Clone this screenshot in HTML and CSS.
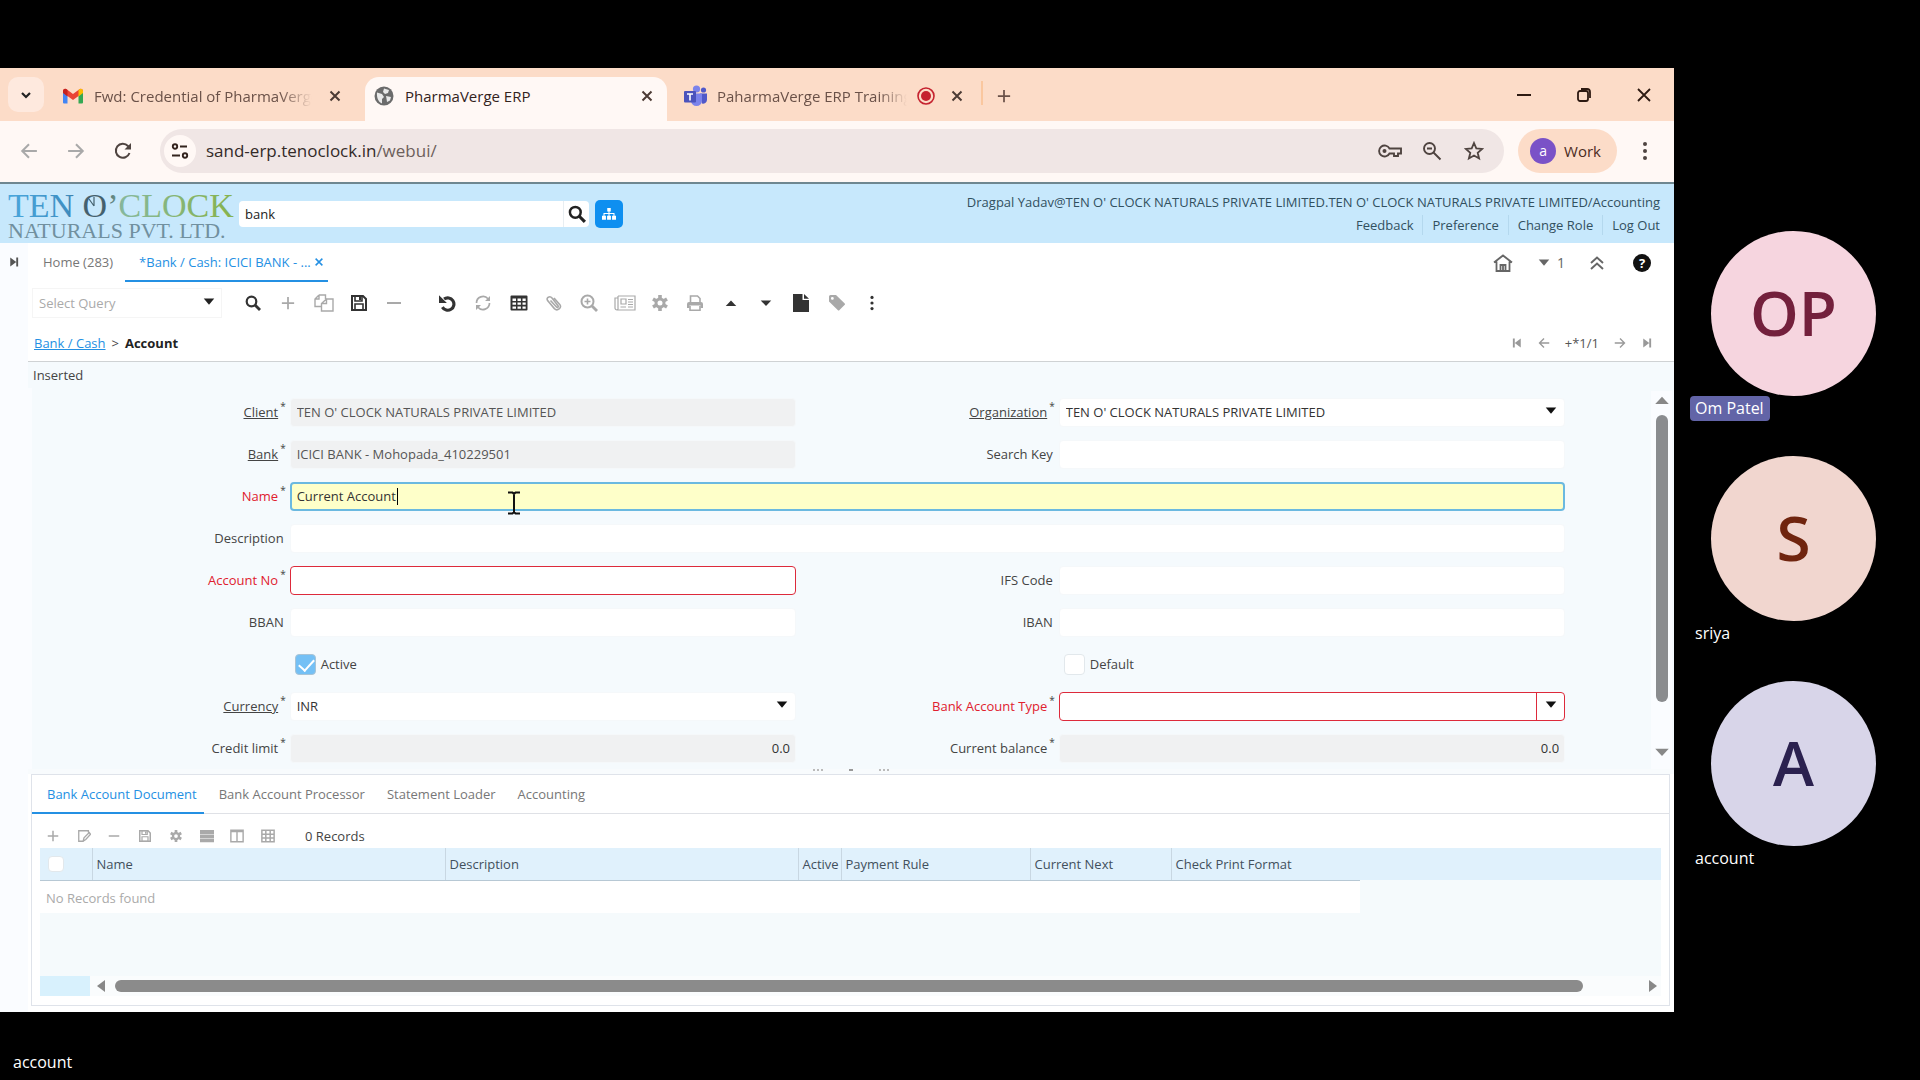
FILE: index.html
```html
<!DOCTYPE html>
<html lang="en">
<head>
<meta charset="utf-8">
<meta name="viewport" content="width=device-width, initial-scale=1">
<title>PharmaVerge ERP</title>
<link rel="stylesheet" href="styles.css">
</head>
<body>
<svg class="sprite" aria-hidden="true">
  <symbol id="i-close" viewBox="0 0 16 16"><path d="M3.500 3.500l9 9M12.500 3.500l-9 9" fill="none" stroke="currentColor" stroke-width="2"/></symbol>
  <symbol id="i-chev" viewBox="0 0 16 16"><path d="M4 6l4 4 4-4" fill="none" stroke="currentColor" stroke-width="2.200"/></symbol>
  <symbol id="i-plus" viewBox="0 0 16 16"><path d="M8 1v14M1 8h14" fill="none" stroke="currentColor" stroke-width="2"/></symbol>
  <symbol id="i-minus" viewBox="0 0 16 16"><path d="M1 8h14" fill="none" stroke="currentColor" stroke-width="2"/></symbol>
  <symbol id="i-dots" viewBox="0 0 16 20"><circle cx="8" cy="3" r="2"/><circle cx="8" cy="10" r="2"/><circle cx="8" cy="17" r="2"/></symbol>
  <symbol id="i-search" viewBox="0 0 16 16"><circle cx="6.500" cy="6.500" r="4.800" fill="none" stroke="currentColor" stroke-width="2.200"/><path d="M10 10l5 5" stroke="currentColor" stroke-width="2.800"/></symbol>
  <symbol id="i-left" viewBox="0 0 16 16"><path d="M15 8H2M8 2L2 8l6 6" fill="none" stroke="currentColor" stroke-width="1.800"/></symbol>
  <symbol id="i-right" viewBox="0 0 16 16"><path d="M1 8h13M8 2l6 6-6 6" fill="none" stroke="currentColor" stroke-width="1.800"/></symbol>
  <symbol id="i-last" viewBox="0 0 16 16"><path d="M3 2l8 6-8 6zM11 2h2.500v12H11z"/></symbol>
  <symbol id="i-first" viewBox="0 0 16 16"><path d="M13 2L5 8l8 6zM5 2H2.500v12H5z"/></symbol>
  <symbol id="i-caret" viewBox="0 0 16 16"><path d="M2 4h12l-6 7z"/></symbol>
  <symbol id="i-up" viewBox="0 0 16 16"><path d="M2 11.500h12L8 5z"/></symbol>
  <symbol id="i-down" viewBox="0 0 16 16"><path d="M2 5h12l-6 6.500z"/></symbol>
  <symbol id="i-save" viewBox="0 0 16 16"><path d="M1 1h11l3 3v11H1z" fill="none" stroke="currentColor" stroke-width="2"/><path d="M4 1h7v5H4zM4 9h8v6H4z" fill="none" stroke="currentColor" stroke-width="1.600"/><path d="M8 2h2v3H8z"/></symbol>
  <symbol id="i-copy" viewBox="0 0 20 18"><path d="M5 1h6.500v4M5 1L1 5v7.500h6.500M5 1v4H1M12.500 5H19v12H7.500V9.500zM12.500 5v4.500h-5" fill="none" stroke="currentColor" stroke-width="1.400"/></symbol>
  <symbol id="i-undo" viewBox="0 0 16 16"><path d="M4.500 4.500A5.500 5.500 0 1 1 3 11.700" fill="none" stroke="currentColor" stroke-width="2.800"/><path d="M0 1v7h7z"/></symbol>
  <symbol id="i-refresh" viewBox="0 0 16 16"><path d="M1.500 8A6.500 6.500 0 0 1 13 3.800M14.500 8A6.500 6.500 0 0 1 3 12.200" fill="none" stroke="currentColor" stroke-width="1.700"/><path d="M15 1v5h-5zM1 15v-5h5z"/></symbol>
  <symbol id="i-table" viewBox="0 0 18 16"><path fill-rule="evenodd" d="M1.500.5h15a1 1 0 0 1 1 1v13a1 1 0 0 1-1 1h-15a1 1 0 0 1-1-1v-13a1 1 0 0 1 1-1zM2.500 3.500v2.400H6V3.500zm5 0v2.400h3.400V3.500zm5 0v2.400h3.200V3.500zm-10 4v2.300H6V7.500zm5 0v2.300h3.400V7.500zm5 0v2.300h3.200V7.500zm-10 4v2.300H6v-2.300zm5 0v2.300h3.400v-2.300zm5 0v2.300h3.200v-2.300z"/></symbol>
  <symbol id="i-clip" viewBox="0 0 16 16"><path d="M4.500 5.500l6 6.500c1 1 2.300-.2 1.500-1.300L6 3C4 .5-.3 2.500 1.600 5.600l6.800 8c3 3 7.800-.8 5.300-4.200L8 3" fill="none" stroke="currentColor" stroke-width="1.600"/></symbol>
  <symbol id="i-zoomin" viewBox="0 0 18 18"><circle cx="7.500" cy="7.500" r="6" fill="none" stroke="currentColor" stroke-width="2"/><path d="M7.500 4.500v6M4.500 7.500h6" stroke="currentColor" stroke-width="1.600"/><path d="M12 12l5 5" stroke="currentColor" stroke-width="2.800"/></symbol>
  <symbol id="i-news" viewBox="0 0 22 16"><path d="M4 1h17v14H3a2 2 0 0 1-2-2V3h3M4 1v12a1.500 1.500 0 0 1-1.500 2" fill="none" stroke="currentColor" stroke-width="1.200"/><path d="M7 4h5v5H7zM14 4.500h5M14 7h5M14 9.500h5M6.500 12h5.500M14 12h5" fill="none" stroke="currentColor" stroke-width="1.200"/></symbol>
  <symbol id="i-gear" viewBox="0 0 16 16"><path d="M8 0v16M1 4l14 8M15 4L1 12" stroke="currentColor" stroke-width="3.600"/><circle cx="8" cy="8" r="4" class="hole" stroke="currentColor" stroke-width="3"/></symbol>
  <symbol id="i-print" viewBox="0 0 18 16"><path d="M4.500 8V1h7L14 3.500V8" fill="none" stroke="currentColor" stroke-width="1.600"/><path d="M3 7h12a2 2 0 0 1 2 2v4h-2.500v-2.500h-11V13H1V9a2 2 0 0 1 2-2z"/><path d="M4 11v4.200h10V11" fill="none" stroke="currentColor" stroke-width="1.600"/></symbol>
  <symbol id="i-file" viewBox="0 0 16 18"><path d="M0 0h9.500v6H16v12H0zM11 0l5 4.800h-5z"/></symbol>
  <symbol id="i-tag" viewBox="0 0 16 16"><path fill-rule="evenodd" d="M0 1.500A1.500 1.500 0 0 1 1.500 0H7l8.500 8.300a1.200 1.200 0 0 1 0 1.800l-5 5a1.200 1.200 0 0 1-1.800 0L0 6.500zM3.300 2a1.400 1.400 0 1 0 .1 2.800A1.400 1.400 0 0 0 3.300 2z"/></symbol>
  <symbol id="i-edit" viewBox="0 0 16 16"><path d="M13 4V2H2v12h5l1-4 6-6 1.500 2-5.500 6-3 2" fill="none" stroke="currentColor" stroke-width="1.500"/></symbol>
  <symbol id="i-rows" viewBox="0 0 16 16"><path d="M0 1h16v5H0zM0 6.500h16v4H0zM0 11h16v4H0z"/></symbol>
  <symbol id="i-cols" viewBox="0 0 16 16"><path d="M1 1.500h14v13H1zM8 2v12M1 3h14" fill="none" stroke="currentColor" stroke-width="1.600"/></symbol>
  <symbol id="i-grid" viewBox="0 0 16 16"><path d="M1 1.500h14v13H1zM5.500 2v12M10.500 2v12M1 6h14M1 10.300h14" fill="none" stroke="currentColor" stroke-width="1.700"/></symbol>
</svg>

<div class="call">
  <div class="stage">
    <main class="browser">
      <div class="tabstrip">
        <button class="tab-search" aria-label="Search tabs"><svg class="ic16"><use href="#i-chev"/></svg></button>
        <div class="tab tab-mail">
          <svg class="ic20" viewBox="0 0 20 16"><path d="M0 2.500V14.500A1 1 0 0 0 1 15.500H4.500V6z" fill="#4285f4"/><path d="M20 2.500V14.500A1 1 0 0 1 19 15.500H15.500V6z" fill="#34a853"/><path d="M0 3a2.300 2.300 0 0 1 3.600-1.800L10 6l6.400-4.800A2.300 2.300 0 0 1 20 3l-4.500 5L10 12 4.500 8z" fill="#ea4335"/><path d="M15.500 2l.9-.8A2.300 2.300 0 0 1 20 3v2l-4.500 3.400z" fill="#fbbc04"/><path d="M0 3a2.300 2.300 0 0 1 3.600-1.800l.9.800v6.400L0 5z" fill="#c5221f"/></svg>
          <span class="tab-title">Fwd: Credential of PharmaVerge</span>
          <button class="plain" aria-label="Close tab"><svg class="ic16"><use href="#i-close"/></svg></button>
        </div>
        <div class="tab tab-active">
          <svg class="ic20" viewBox="0 0 20 20"><circle cx="10" cy="10" r="9.500" fill="#6b6b6b"/><path d="M3 6.500l5 1.500 2 3-2 2v4.500C4.500 16 2.500 12 3 6.500zM10 2.500l5 1.500-1 3-3 1-2-2zM12 10l5 1-1 3.500-3 1.500-.5-3.500z" fill="#fff" opacity=".85"/></svg>
          <span class="tab-title">PharmaVerge ERP</span>
          <button class="plain" aria-label="Close tab"><svg class="ic16"><use href="#i-close"/></svg></button>
        </div>
        <div class="tab tab-teams">
          <svg class="ic24" viewBox="0 0 24 22"><circle cx="19.500" cy="5" r="2.600" fill="#5059c9"/><circle cx="12.500" cy="4" r="3.600" fill="#7b83eb"/><path d="M16 8.500h7v6.500a4 4 0 0 1-5 3.500z" fill="#5059c9"/><path d="M7 8.500h11v7a5.500 5.500 0 0 1-11 0z" fill="#7b83eb"/><rect y="6" width="12" height="11.500" rx="1" fill="#4b53bc"/><path d="M3 9h6M6 9v6.500" stroke="#fff" stroke-width="1.600"/></svg>
          <span class="tab-title">PaharmaVerge ERP Training</span>
          <svg class="ic20" viewBox="0 0 20 20"><circle cx="10" cy="10" r="8" fill="none" stroke="#c5222f" stroke-width="1.600"/><circle cx="10" cy="10" r="5" fill="#c5222f"/></svg>
          <button class="plain" aria-label="Close tab"><svg class="ic16"><use href="#i-close"/></svg></button>
        </div>
        <button class="plain new-tab" aria-label="New tab"><svg class="ic14"><use href="#i-plus"/></svg></button>
        <div class="win-controls">
          <button class="plain" aria-label="Minimize"><svg class="ic16"><use href="#i-minus"/></svg></button>
          <button class="plain" aria-label="Restore"><svg class="ic16" viewBox="0 0 16 16"><rect x="2" y="4" width="10" height="10" rx="2" fill="none" stroke="currentColor" stroke-width="1.800"/><path d="M5 2h6a3 3 0 0 1 3 3v6" fill="none" stroke="currentColor" stroke-width="1.800"/></svg></button>
          <button class="plain" aria-label="Close"><svg class="ic16" viewBox="0 0 16 16"><path d="M2 2l12 12M14 2L2 14" stroke="currentColor" stroke-width="1.800"/></svg></button>
        </div>
      </div>

      <div class="navbar">
        <button class="plain nav dim" aria-label="Back"><svg class="ic18"><use href="#i-left"/></svg></button>
        <button class="plain nav dim" aria-label="Forward"><svg class="ic18"><use href="#i-right"/></svg></button>
        <button class="plain nav" aria-label="Reload"><svg class="ic20" viewBox="0 0 20 20"><path d="M16.500 12A7 7 0 1 1 15 5l2 2" fill="none" stroke="currentColor" stroke-width="2"/><path d="M18 2v6.500h-6.500z"/></svg></button>
        <div class="omnibox">
          <button class="site-info" aria-label="Site information"><svg class="ic18" viewBox="0 0 18 18"><circle cx="4" cy="4.500" r="2.200" fill="none" stroke="currentColor" stroke-width="1.900"/><circle cx="14" cy="13.500" r="2.200" fill="none" stroke="currentColor" stroke-width="1.900"/><path d="M9 4.500h7M1 13.500h8" stroke="currentColor" stroke-width="2"/></svg></button>
          <div class="url">sand-erp.tenoclock.in<span>/webui/</span></div>
          <button class="plain nav" aria-label="Passwords"><svg class="ic24" viewBox="0 0 24 16"><path d="M11.500 5.500A5.500 5.500 0 1 0 11.500 10.500H16V13h4v-2.500h3v-5z" fill="none" stroke="currentColor" stroke-width="1.900"/><circle cx="6.500" cy="8" r="2"/></svg></button>
          <button class="plain nav" aria-label="Zoom"><svg class="ic20" viewBox="0 0 20 20"><circle cx="7.500" cy="7.500" r="5.500" fill="none" stroke="currentColor" stroke-width="1.900"/><path d="M11.500 11.500l7 7M5 7.500h5" stroke="currentColor" stroke-width="1.900"/></svg></button>
          <button class="plain nav" aria-label="Bookmark"><svg class="ic20" viewBox="0 0 20 20"><path d="M10 2l2.300 5.400 5.900.5-4.500 3.900 1.400 5.700-5.100-3-5.100 3 1.400-5.700L1.800 7.900l5.900-.5z" fill="none" stroke="currentColor" stroke-width="1.800"/></svg></button>
        </div>
        <button class="profile"><span class="avatar">a</span>Work</button>
        <button class="plain nav more" aria-label="Menu"><svg class="ic20"><use href="#i-dots"/></svg></button>
      </div>

      <header class="app-header">
        <svg class="logo" viewBox="0 0 231 52" role="img" aria-label="Ten O'Clock Naturals Pvt. Ltd.">
          <defs><linearGradient id="lg" gradientUnits="userSpaceOnUse" x1="0" y1="0" x2="228" y2="0"><stop offset="0" stop-color="#4aa7dc"/><stop offset=".26" stop-color="#3f8fc2"/><stop offset=".34" stop-color="#44616e"/><stop offset=".43" stop-color="#44616e"/><stop offset=".5" stop-color="#86b89c"/><stop offset="1" stop-color="#86b24b"/></linearGradient></defs>
          <text x="0" y="27" class="logo-a" fill="url(#lg)">TEN O’CLOCK</text>
          <text x="0" y="48" class="logo-b">NATURALS PVT. LTD.</text>
          <path d="M86 16V7M86 16l-5-7" stroke="#44616e" stroke-width="1.200"/>
        </svg>
        <div class="menu-search">
          <input type="text" value="bank" aria-label="Menu search">
          <button aria-label="Search"><svg class="ic18"><use href="#i-search"/></svg></button>
        </div>
        <button class="sitemap" aria-label="Menu tree"><svg class="ic14" viewBox="0 0 16 14"><path d="M6 0h4v4H6zM0 9h4.500v4.500H0zM5.800 9h4.400v4.500H5.800zM11.500 9H16v4.500h-4.500z"/><path d="M8 3v7M2.300 10V6.500h11.400V10" fill="none" stroke="currentColor" stroke-width="1.200"/></svg></button>
        <div class="user">
          <div>Dragpal Yadav@TEN O' CLOCK NATURALS PRIVATE LIMITED.TEN O' CLOCK NATURALS PRIVATE LIMITED/Accounting</div>
          <nav><a href="#">Feedback</a><a href="#">Preference</a><a href="#">Change Role</a><a href="#">Log Out</a></nav>
        </div>
      </header>

      <div class="desktop">
        <div class="rail"><button class="plain" aria-label="Expand side panel"><svg class="ic12"><use href="#i-last"/></svg></button></div>
        <div class="content">
          <div class="app-tabs">
            <a href="#" class="app-tab">Home (283)</a>
            <div class="app-tab current"><a href="#">*Bank / Cash: ICICI BANK - ...</a><button class="plain" aria-label="Close"><svg class="ic12"><use href="#i-close"/></svg></button></div>
            <div class="app-actions">
              <button class="plain" aria-label="Home"><svg class="ic20" viewBox="0 0 20 18"><path d="M1 8.500L10 1.500l9 7M3.500 7.500v9.500h13V7.500M7.500 17v-6h5v6M10 17v-6" fill="none" stroke="currentColor" stroke-width="1.800"/></svg></button>
              <button class="plain count"><svg class="ic14"><use href="#i-caret"/></svg>1</button>
              <button class="plain" aria-label="Collapse header"><svg class="ic16" viewBox="0 0 16 16"><path d="M2 8l6-5.500L14 8M2 14l6-5.500 6 5.500" fill="none" stroke="currentColor" stroke-width="1.900"/></svg></button>
              <button class="plain help" aria-label="Help">?</button>
            </div>
          </div>

          <div class="toolbar">
            <div class="query"><select aria-label="Select query"><option>Select Query</option></select><svg class="ic14"><use href="#i-caret"/></svg></div>
            <div class="tools tools-a">
              <button class="plain" aria-label="Find"><svg class="ic16"><use href="#i-search"/></svg></button>
              <button class="plain dim" aria-label="New"><svg class="ic14"><use href="#i-plus"/></svg></button>
              <button class="plain dim" aria-label="Copy"><svg class="ic20"><use href="#i-copy"/></svg></button>
              <button class="plain" aria-label="Save"><svg class="ic16"><use href="#i-save"/></svg></button>
              <button class="plain dim" aria-label="Delete"><svg class="ic16"><use href="#i-minus"/></svg></button>
            </div>
            <div class="tools tools-b">
              <button class="plain" aria-label="Undo"><svg class="ic18"><use href="#i-undo"/></svg></button>
              <button class="plain dim" aria-label="Refresh"><svg class="ic16"><use href="#i-refresh"/></svg></button>
              <button class="plain" aria-label="Toggle grid"><svg class="ic18"><use href="#i-table"/></svg></button>
              <button class="plain dim" aria-label="Attachment"><svg class="ic16"><use href="#i-clip"/></svg></button>
              <button class="plain dim" aria-label="Zoom across"><svg class="ic18"><use href="#i-zoomin"/></svg></button>
              <button class="plain dim" aria-label="Report"><svg class="ic22"><use href="#i-news"/></svg></button>
              <button class="plain dim" aria-label="Process"><svg class="ic16"><use href="#i-gear"/></svg></button>
              <button class="plain dim" aria-label="Print"><svg class="ic18"><use href="#i-print"/></svg></button>
              <button class="plain" aria-label="Parent record"><svg class="ic14"><use href="#i-up"/></svg></button>
              <button class="plain" aria-label="Detail record"><svg class="ic14"><use href="#i-down"/></svg></button>
              <button class="plain" aria-label="Document"><svg class="ic18"><use href="#i-file"/></svg></button>
              <button class="plain dim" aria-label="Label"><svg class="ic16"><use href="#i-tag"/></svg></button>
              <button class="plain" aria-label="More"><svg class="ic16"><use href="#i-dots"/></svg></button>
            </div>
          </div>

          <div class="crumbs">
            <a href="#">Bank / Cash</a><span>&gt;</span><strong>Account</strong>
            <div class="pager">
              <button class="plain" aria-label="First"><svg class="ic10"><use href="#i-first"/></svg></button>
              <button class="plain" aria-label="Previous"><svg class="ic10"><use href="#i-left"/></svg></button>
              <span>+*1/1</span>
              <button class="plain" aria-label="Next"><svg class="ic10"><use href="#i-right"/></svg></button>
              <button class="plain" aria-label="Last"><svg class="ic10"><use href="#i-last"/></svg></button>
            </div>
          </div>

          <div class="status">Inserted</div>

          <div class="form-area">
            <form class="form">
              <label class="ref req" for="client"><span>Client</span></label>
              <input id="client" class="ro" type="text" readonly value="TEN O' CLOCK NATURALS PRIVATE LIMITED">
              <label class="ref req" for="org"><span>Organization</span></label>
              <div class="combo"><select id="org"><option>TEN O' CLOCK NATURALS PRIVATE LIMITED</option></select><svg class="ic14"><use href="#i-caret"/></svg></div>

              <label class="ref req" for="bank"><span>Bank</span></label>
              <input id="bank" class="ro" type="text" readonly value="ICICI BANK - Mohopada_410229501">
              <label for="key"><span>Search Key</span></label>
              <input id="key" type="text">

              <label class="req missing" for="name"><span>Name</span></label>
              <div class="wide">
                <input id="name" class="editing" type="text" value="Current Account">
                <i class="text-caret"></i>
                <svg class="ibeam" viewBox="0 0 14 24"><path d="M1 1.500h4.500L7 3l1.500-1.500H13M7 2v20M1 22.500h4.500L7 21l1.500 1.500H13" fill="none" stroke="#111" stroke-width="2"/></svg>
              </div>

              <label for="desc"><span>Description</span></label>
              <input id="desc" class="wide" type="text">

              <label class="req missing" for="accno"><span>Account No</span></label>
              <input id="accno" class="invalid" type="text">
              <label for="ifs"><span>IFS Code</span></label>
              <input id="ifs" type="text">

              <label for="bban"><span>BBAN</span></label>
              <input id="bban" type="text">
              <label for="iban"><span>IBAN</span></label>
              <input id="iban" type="text">

              <div class="tick tick-left"><input id="active" type="checkbox" checked><label for="active">Active</label></div>
              <div class="tick tick-right"><input id="default" type="checkbox"><label for="default">Default</label></div>

              <label class="ref req" for="cur"><span>Currency</span></label>
              <div class="combo"><select id="cur"><option>INR</option></select><svg class="ic14"><use href="#i-caret"/></svg></div>
              <label class="req missing" for="type"><span>Bank Account Type</span></label>
              <div class="combo combo-invalid"><select id="type"><option></option></select><svg class="ic14"><use href="#i-caret"/></svg></div>

              <label class="req" for="limit"><span>Credit limit</span></label>
              <input id="limit" class="ro num" type="text" readonly value="0.0">
              <label class="req" for="bal"><span>Current balance</span></label>
              <input id="bal" class="ro num" type="text" readonly value="0.0">
            </form>
            <div class="vscroll"><svg class="ic18"><use href="#i-up"/></svg><i></i><svg class="ic18"><use href="#i-down"/></svg></div>
          </div>

          <div class="splitter"><i></i><b></b><i></i></div>

          <section class="detail">
            <nav class="detail-tabs">
              <a href="#" class="current">Bank Account Document</a><a href="#">Bank Account Processor</a><a href="#">Statement Loader</a><a href="#">Accounting</a>
            </nav>
            <div class="detail-tools">
              <div class="tools tools-c dim">
                <button class="plain" aria-label="New"><svg class="ic10"><use href="#i-plus"/></svg></button>
                <button class="plain" aria-label="Edit"><svg class="ic14"><use href="#i-edit"/></svg></button>
                <button class="plain" aria-label="Delete"><svg class="ic12"><use href="#i-minus"/></svg></button>
                <button class="plain" aria-label="Save"><svg class="ic12"><use href="#i-save"/></svg></button>
                <button class="plain" aria-label="Process"><svg class="ic12"><use href="#i-gear"/></svg></button>
                <button class="plain" aria-label="Row view"><svg class="ic14"><use href="#i-rows"/></svg></button>
                <button class="plain" aria-label="Columns"><svg class="ic14"><use href="#i-cols"/></svg></button>
                <button class="plain" aria-label="Grid"><svg class="ic14"><use href="#i-grid"/></svg></button>
              </div>
              <span>0 Records</span>
            </div>
            <div class="grid">
              <table>
                <colgroup><col class="c-tick"><col class="c-text"><col class="c-text"><col class="c-active"><col class="c-rule"><col class="c-next"><col class="c-rule"><col></colgroup>
                <thead><tr><th><input type="checkbox" aria-label="Select all"></th><th>Name</th><th>Description</th><th>Active</th><th>Payment Rule</th><th>Current Next</th><th>Check Print Format</th><th class="filler"></th></tr></thead>
                <tbody><tr><td colspan="7">No Records found</td><td class="filler"></td></tr></tbody>
              </table>
              <div class="hscroll"><span></span><svg class="ic16" viewBox="0 0 16 16"><path d="M12 2v12L4 8z"/></svg><div class="track"><i></i></div><svg class="ic16" viewBox="0 0 16 16"><path d="M4 2v12l8-6z"/></svg></div>
            </div>
          </section>
        </div>
      </div>
    </main>

    <aside class="people">
      <figure class="person speaking"><div class="face pink">OP</div><figcaption>Om Patel</figcaption></figure>
      <figure class="person"><div class="face rust">S</div><figcaption>sriya</figcaption></figure>
      <figure class="person"><div class="face violet">A</div><figcaption>account</figcaption></figure>
    </aside>
  </div>
  <footer class="presenter">account</footer>
</div>
</body>
</html>
```
FILE: styles.css
```css
* { box-sizing: border-box; }
body { margin: 0; background: #000; color: #444; font: 13px/20px "Open Sans", "Noto Sans", sans-serif; }
a { color: inherit; text-decoration: none; }
svg { fill: currentColor; flex: none; display: block; }
button, input, select { font: inherit; color: inherit; }
.sprite { display: none; }
.ic10 { width: 12px; height: 12px; }
.ic12 { width: 12px; height: 12px; }
.ic14 { width: 14px; height: 14px; }
.ic16 { width: 16px; height: 16px; }
.ic18 { width: 18px; height: 18px; }
.ic20 { width: 20px; height: 20px; }
.ic22 { width: 22px; height: 18px; }
.ic24 { width: 24px; height: 22px; }
.hole { fill: #fff; }
.plain { display: flex; align-items: center; justify-content: center; padding: 0; border: 0; background: none; }
.dim, .plain.dim { color: #a9a9a9; }

.call { min-height: 100vh; padding-top: 68px; }
.stage { display: flex; }
.browser { flex: 1; min-width: 0; background: #fff; }

/* Browser chrome */
.tabstrip { display: flex; align-items: stretch; height: 53px; padding: 9px 0 0 8px; background: #fcdcc8; color: #6a5148; font-size: 15px; }
.tab-search { display: flex; align-items: center; justify-content: center; width: 36px; height: 35px; padding: 0; border: 0; border-radius: 10px; background: #fee9de; color: #222; }
.tab { display: flex; align-items: center; gap: 11px; padding: 0 12px 6px 19px; }
.tab-title { flex: 1; min-width: 0; overflow: hidden; white-space: nowrap; line-height: 24px; mask-image: linear-gradient(90deg, #000 85%, transparent); }
.tab .plain { color: #4c3b35; }
.tab-mail { width: 321px; padding-right: 22px; }
.tab-mail .plain { margin-left: 4px; }
.tab-active { width: 302px; border-radius: 14px 14px 0 0; background: #fff8f5; color: #33231d; padding-left: 9px; }
.tab-active .tab-title { mask-image: none; }
.tab-teams { width: 316px; padding: 0 16px 6px 17px; gap: 9px; border-right: 2px solid #fac79f; border-image: linear-gradient(transparent 12%, #fac79f 12% 62%, transparent 62%) 1; }
.tab-teams .plain { margin-left: 4px; }
.new-tab { padding: 0 14px 6px; }
.win-controls { display: flex; gap: 44px; margin-left: auto; padding: 0 22px 8px; color: #2d1a12; }

.navbar { display: flex; align-items: center; gap: 19px; height: 63px; padding: 0 15px 2px; border-bottom: 2px solid #6f8790; background: #fff8f5; color: #4f4440; }
.nav { width: 28px; height: 28px; }
.omnibox { flex: 1; display: flex; align-items: center; gap: 14px; height: 44px; margin: 0 -5px 0 4px; padding: 0 16px 0 4px; border-radius: 22px; background: #f0e6e5; }
.site-info { display: flex; align-items: center; justify-content: center; width: 32px; height: 32px; padding: 0; border: 0; border-radius: 50%; background: #fff8f5; color: #33231d; }
.url { flex: 1; margin-left: -4px; font-size: 17px; line-height: 28px; color: #332a28; }
.url span { color: #6d5f5b; }
.profile { display: flex; align-items: center; gap: 8px; height: 44px; padding: 0 16px 0 12px; border: 0; border-radius: 22px; background: #fcdcc8; color: #4a2b1d; font-size: 15px; }
.avatar { width: 26px; height: 26px; border-radius: 50%; background: #7a52c7; color: #fff; font-size: 14px; line-height: 25px; }
.more { margin-left: -5px; }

/* Application header */
.app-header { display: flex; align-items: flex-start; height: 59px; padding: 0 14px 0 8px; background: #c7e8fc; color: #32505f; }
.logo { width: 231px; height: 52px; margin-top: 6px; }
.logo-a { font: 34px "Liberation Serif", serif; }
.logo-b { font: 22px "Liberation Serif", serif; fill: #71909f; }
.menu-search { display: flex; width: 350px; height: 26px; margin-top: 17px; background: #fff; border-radius: 4px; color: #222; }
.menu-search input { flex: 1; min-width: 0; padding: 0 6px; border: 0; background: none; }
.menu-search button { width: 26px; padding: 0 4px; border: 0; border-left: 1px solid #e8eef2; background: none; }
.sitemap { display: flex; align-items: center; justify-content: center; width: 28px; height: 28px; margin: 16px 0 0 6px; padding: 0; border: 0; border-radius: 5px; background: #0e8ff0; color: #fff; }
.user { margin: 8px 0 0 auto; text-align: right; }
.user nav { display: flex; justify-content: flex-end; margin-top: 3px; }
.user a + a { margin-left: 9px; padding-left: 9px; border-left: 1px solid #b4d8ee; }

.desktop { display: flex; background: #fff; }
.rail { width: 28px; padding: 13px 8px; background: #fafcff; color: #555; }
.content { flex: 1; min-width: 0; }

.app-tabs { display: flex; height: 39px; padding-right: 23px; color: #777; }
.app-tab { padding: 9px 12px 0 15px; }
.app-tab.current { display: flex; align-items: flex-start; gap: 2px; padding: 9px 3px 0 14px; border-bottom: 2px solid #2490e3; color: #2490e3; }
.app-tab.current .plain { height: 20px; color: #2490e3; }
.app-actions { display: flex; align-items: center; gap: 24px; margin-left: auto; color: #666; }
.count { gap: 6px; font-size: 14px; }
.help { width: 18px; height: 18px; margin-left: 4px; border-radius: 50%; background: #111; color: #fff; font-weight: 700; font-size: 13px; }

.toolbar { display: flex; align-items: center; height: 42px; padding-left: 4px; color: #333; }
.query { position: relative; width: 190px; height: 30px; border: 1px solid #f5f5f5; color: #aaa; }
.query select { width: 100%; height: 28px; padding: 0 6px; border: 0; appearance: none; background: none; }
.query svg { position: absolute; right: 5px; top: 6px; color: #222; }
.tools { display: flex; justify-content: space-between; }
.tools .plain { width: 24px; height: 24px; }
.tools-a { width: 165px; margin-left: 19px; }
.tools-b { width: 448px; margin-left: 30px; }
.tools-c { width: 239px; }

.crumbs { display: flex; align-items: center; height: 38px; padding: 0 21px 0 6px; border-bottom: 1px solid #cfd2d4; }
.crumbs a { color: #2490e3; text-decoration: underline; }
.crumbs > span { margin: 0 6px; }
.crumbs strong { color: #222; }
.pager { display: flex; align-items: center; gap: 15px; margin-left: auto; color: #999; }
.pager .plain { color: #999; }
.pager span { color: #555; }

.status { height: 26px; padding: 3px 5px 0; background: #f5fafd; }
.form-area { display: flex; padding: 3px 2px 0 4px; background: linear-gradient(90deg, #fafcff 4px, #f5fafd 4px); }
.form { flex: 1; display: grid; grid-template-columns: 258fr 507fr 263fr 507fr 86fr; grid-auto-rows: 42px; align-items: center; }
.form > label { grid-column: 1; padding-right: 6px; text-align: right; white-space: nowrap; }
.form > label + input, .form > label + .combo { grid-column: 2; }
.form > label[for="org"], .form > label[for="key"], .form > label[for="ifs"], .form > label[for="iban"], .form > label[for="type"], .form > label[for="bal"] { grid-column: 3; }
#key, #ifs, #iban, #bal, .form > label[for="org"] + .combo, .form > label[for="type"] + .combo { grid-column: 4; }
.form > input.wide, .form > .wide { grid-column: 2 / 5; }
.form > .req { padding-right: 4px; }
.req::after { content: "*"; margin-left: 2px; font-size: 10px; vertical-align: 7px; line-height: 1px; }
.ref span { text-decoration: underline; }
.missing span { color: #e0202e; }
.form input[type="text"], .combo { width: 100%; height: 29px; border: 1px solid #f5f8fa; border-radius: 4px; background: #fff; color: #333; }
.form input[type="text"] { padding: 0 6px; }
.form input.ro { background: #f0f1f2; color: #555; }
.form input.num { padding-right: 5px; text-align: right; color: #333; }
.form input.editing { border: 2px solid #6bb9e0; background: #feffc9; padding: 0 5px; }
.form input.invalid, .combo.combo-invalid { border-color: #dd2a3b; }
.wide { position: relative; }
.text-caret { position: absolute; left: 107px; top: 6px; width: 1px; height: 17px; background: #000; }
.ibeam { position: absolute; left: 217px; top: 9px; width: 14px; height: 24px; }
.combo { position: relative; }
.combo select { width: 100%; height: 27px; padding: 0 6px; border: 0; appearance: none; background: none; }
.combo svg { position: absolute; right: 6px; top: 5px; color: #111; }
.combo-invalid::after { content: ""; position: absolute; right: 27px; top: 0; bottom: 0; border-left: 1px solid #dd2a3b; }
.tick { display: flex; align-items: center; gap: 5px; padding-left: 5px; }
.tick-left { grid-column: 2; }
.tick-right { grid-column: 4; }
input[type="checkbox"] { appearance: none; width: 21px; height: 21px; margin: 0; border: 1px solid #e2e8ec; border-radius: 4px; background: #fff; }
input[type="checkbox"]:checked { position: relative; border-color: #a9c4d6; background: #74c0f5; }
input[type="checkbox"]:checked::after { content: ""; position: absolute; left: 6px; top: 1px; width: 7px; height: 13px; border: solid #fff; border-width: 0 2px 2px 0; transform: rotate(42deg); }
.vscroll { display: flex; flex-direction: column; align-items: center; width: 21px; padding: 0 0 8px; background: #fafcff; color: #888; }
.vscroll i { width: 12px; height: 287px; margin: 6px 0 auto; border-radius: 6px; background: #8a8c8f; }

.splitter { display: flex; justify-content: center; gap: 26px; height: 5px; background: #f8fbfd; }
.splitter i { width: 10px; height: 2px; background: repeating-linear-gradient(90deg, #bbb 0 2px, transparent 2px 4px); }
.splitter b { width: 4px; height: 2px; background: #999; }

.detail { margin: 0 4px 6px 3px; border: 1px solid #dfe3ea; }
.detail-tabs { display: flex; height: 39px; padding-right: 16px; border-bottom: 1px solid #dfe1e6; color: #777; }
.detail-tabs a { height: 39px; padding: 9px 7px 0 15px; }
.detail-tabs .current { border-bottom: 2px solid #2490e3; color: #2490e3; }
.detail-tools { display: flex; align-items: center; gap: 25px; height: 34px; padding: 10px 0 0 9px; }
.grid { margin: 0 8px 9px; background: #f5fafc; }
table { width: 100%; table-layout: fixed; border-collapse: collapse; }
.c-tick { width: 52px; }
.c-text { width: 353px; }
.c-active { width: 43px; }
.c-rule { width: 189px; }
.c-next { width: 141px; }
th { height: 32px; padding: 0 4px; border-bottom: 1px solid #b7c8d4; border-right: 1px solid #c8d7e2; background: #e0f1fc; color: #42505c; text-align: left; font-weight: 400; white-space: nowrap; }
th:first-child { padding-left: 8px; }
th input[type="checkbox"] { display: block; width: 16px; height: 16px; }
th:nth-child(7) { border-right: 0; }
th.filler { border: 0; }
td { height: 33px; padding: 2px 6px 0; background: #fff; color: #aaa; }
td.filler { background: none; }
.hscroll { display: flex; align-items: center; height: 20px; margin-top: 63px; background: #fafcfd; color: #888; }
.hscroll span { align-self: stretch; width: 50px; margin-right: 3px; background: #d8f1fd; }
.track { flex: 1; padding: 0 62px 0 6px; }
.track i { display: block; height: 12px; border-radius: 6px; background: #8b8b8b; }

/* Meeting participants */
.people { display: flex; flex-direction: column; gap: 36px; width: 246px; padding: 163px 16px 0; color: #fff; font-size: 16px; }
.person { height: 189px; margin: 0; }
.face { width: 165px; height: 165px; margin-left: 21px; border-radius: 50%; text-align: center; font-size: 62px; line-height: 163px; font-weight: 600; }
.pink { background: #f6d5df; color: #73203c; }
.rust { background: #f1d6cf; color: #70250f; }
.violet { background: #d8d5e9; color: #2b214f; }
figcaption { display: inline-block; padding: 0 6px 0 5px; border-radius: 4px; line-height: 25px; }
.speaking figcaption { background: #6264a7; }
.presenter { padding: 38px 13px 0; color: #fff; font-size: 16px; line-height: 24px; }
```
